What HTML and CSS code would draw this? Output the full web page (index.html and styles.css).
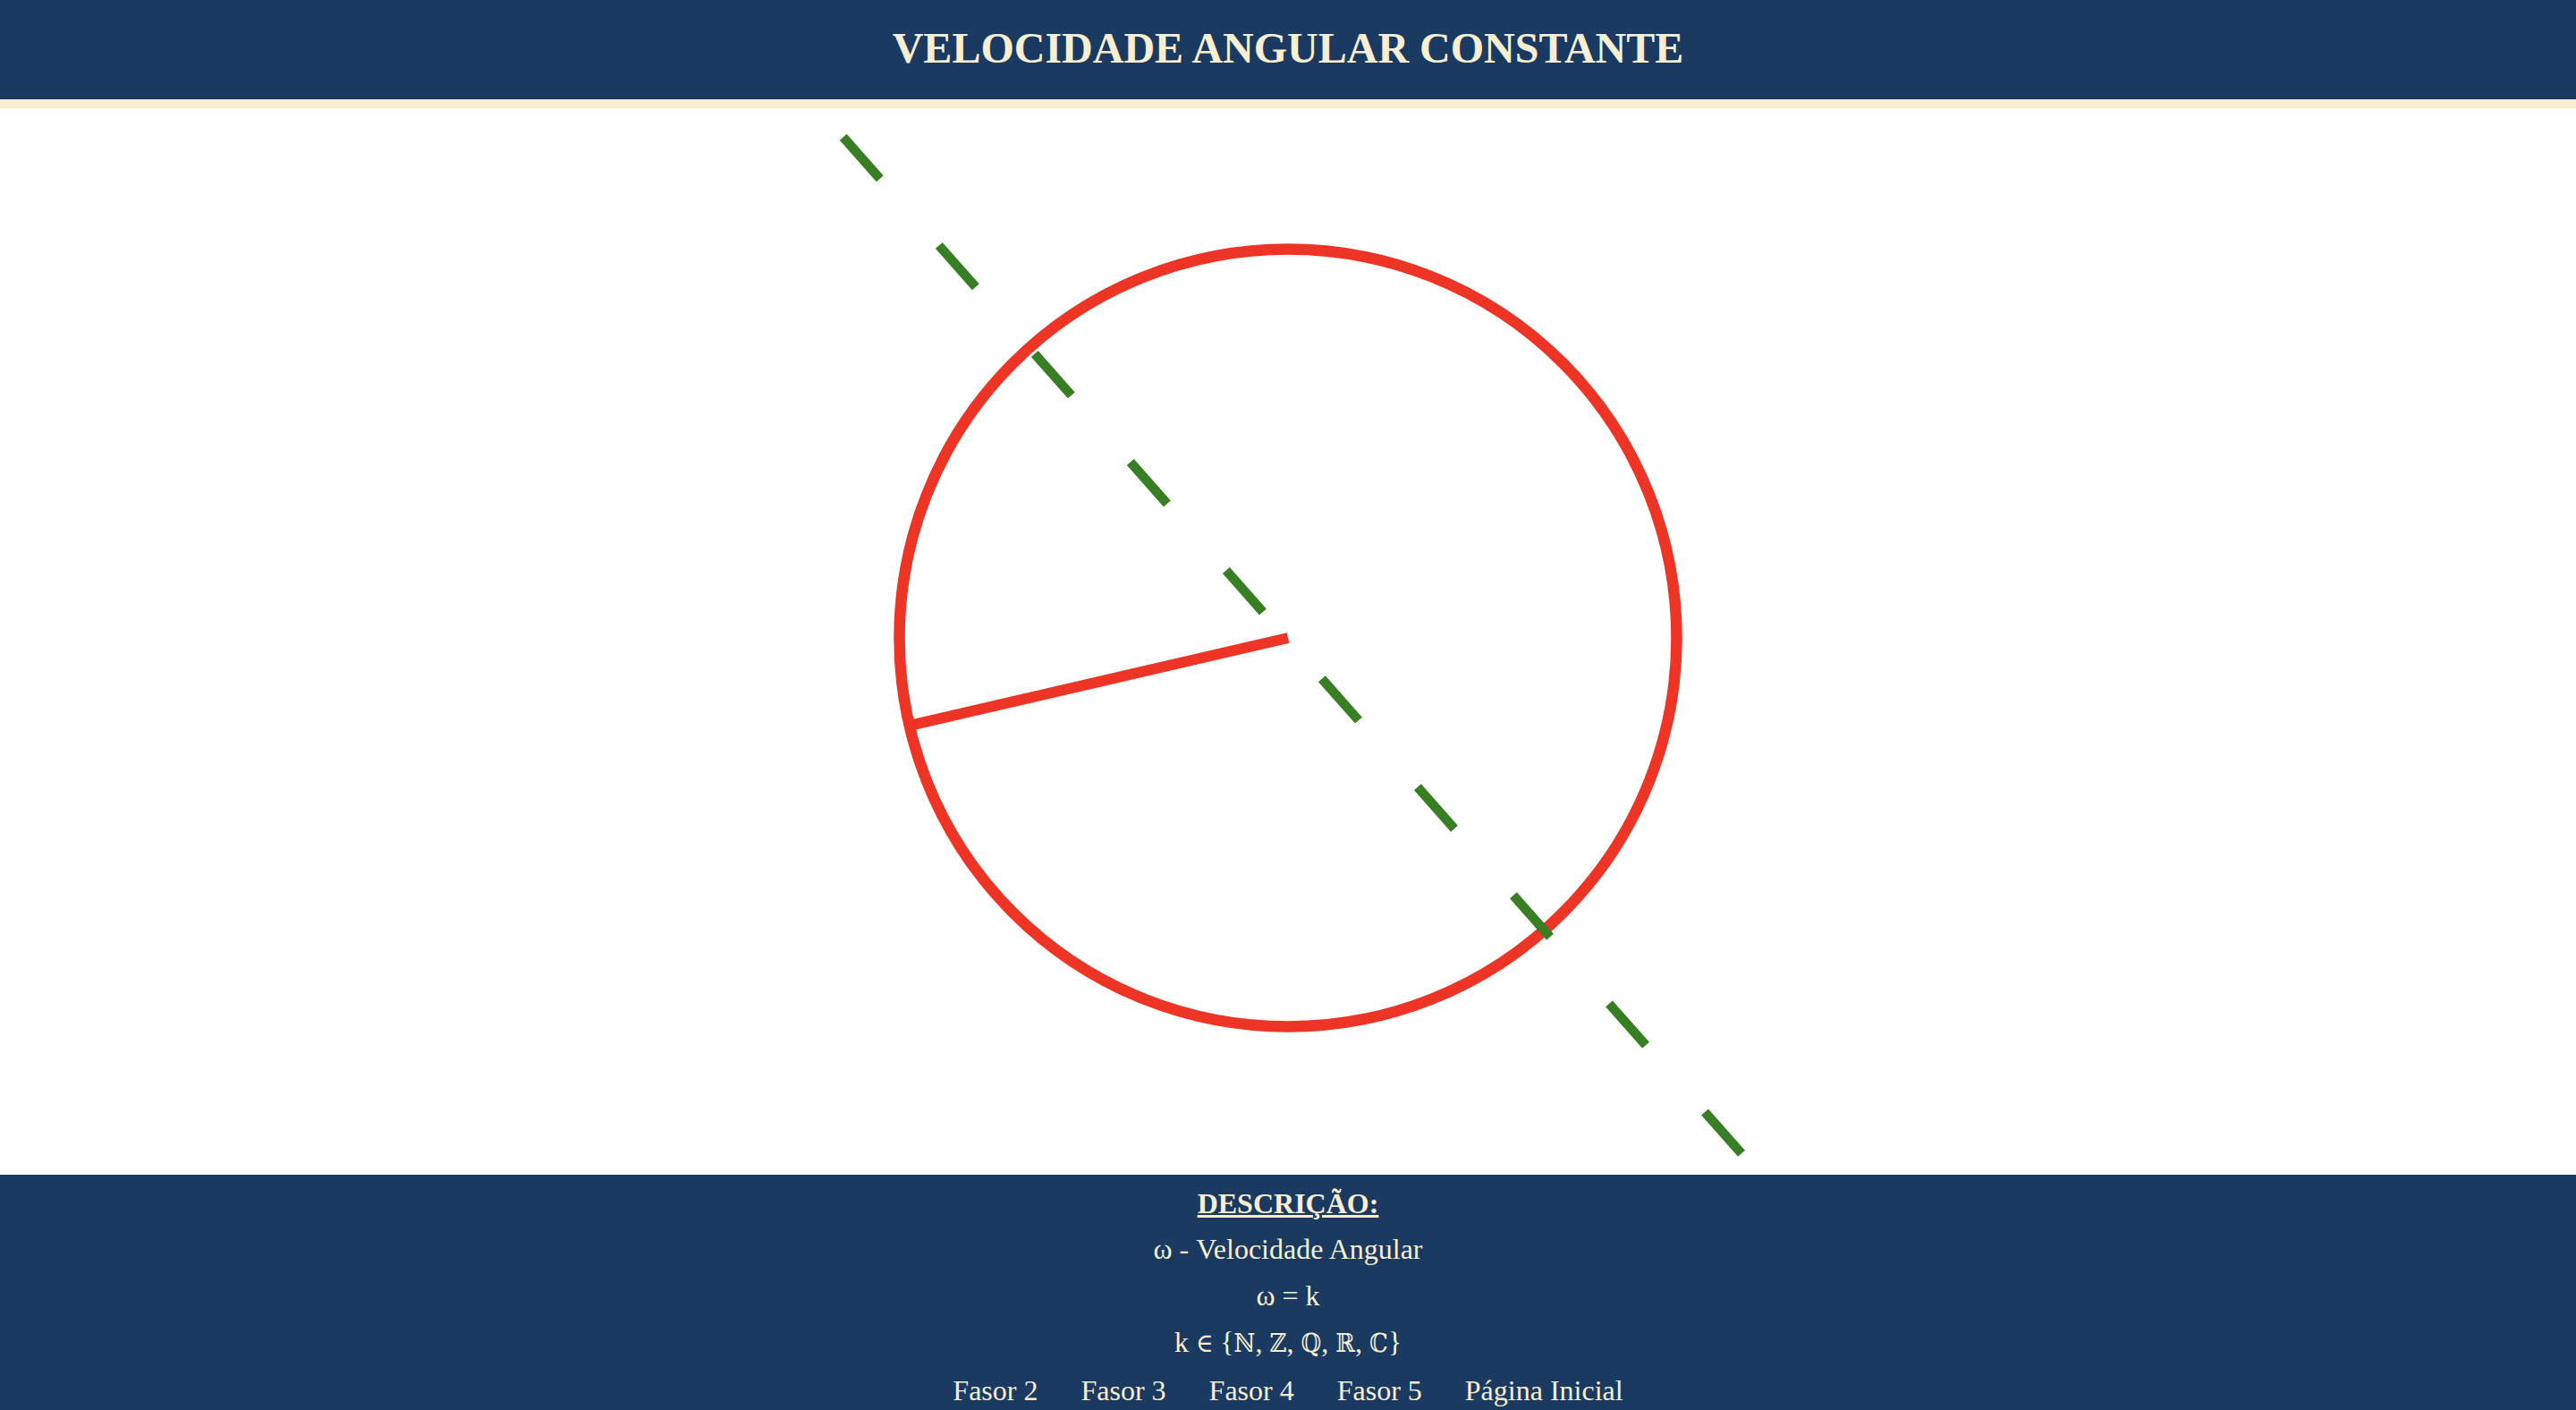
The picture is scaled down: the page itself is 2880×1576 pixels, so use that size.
FILE: index.html
```html
<!DOCTYPE html>
<html lang="pt">
<head>
<meta charset="utf-8">
<title>Velocidade Angular Constante</title>
<link rel="stylesheet" href="styles.css">
</head>
<body>
<header class="topbar">
  <h2 class="title">VELOCIDADE ANGULAR CONSTANTE</h2>
</header>
<main class="stage">
  <svg class="canvas" width="2880" height="1192" viewBox="0 121 2880 1192" xmlns="http://www.w3.org/2000/svg">
    <circle class="orbit" cx="1440" cy="713" r="434.5"/>
    <line class="radius" x1="1440" y1="713" x2="1016.2" y2="811.2"/>
    <line class="axis" x1="942.7" y1="153.3" x2="1947" y2="1289.3"/>
  </svg>
</main>
<footer class="info">
  <p class="heading">DESCRIÇÃO:</p>
  <p class="line">ω - Velocidade Angular</p>
  <p class="line">ω = k</p>
  <p class="line">k <span class="sym">∈</span> {<span class="sym">ℕ</span>, <span class="sym">ℤ</span>, <span class="sym">ℚ</span>, <span class="sym">ℝ</span>, <span class="sym">ℂ</span>}</p>
  <nav class="links">
    <a href="#">Fasor 2</a>
    <a href="#">Fasor 3</a>
    <a href="#">Fasor 4</a>
    <a href="#">Fasor 5</a>
    <a href="#">Página Inicial</a>
  </nav>
</footer>
</body>
</html>
```
FILE: styles.css
```css
html, body {
  margin: 0;
  padding: 0;
  height: 1576px;
  overflow: hidden;
  background: #ffffff;
  font-family: "Liberation Serif", "DejaVu Serif", serif;
}

.topbar {
  background: #1b3a62;
  border-bottom: 10px solid #f8efd2;
  height: 111px;
  box-sizing: content-box;
}

.title {
  margin: 0;
  padding-top: 30px;
  font-size: 48px;
  line-height: 48px;
  font-weight: bold;
  color: #f8efd2;
  text-align: center;
}

.stage {
  height: 1192px;
  background: #ffffff;
}

.canvas {
  display: block;
}

.orbit {
  fill: none;
  stroke: #ee3425;
  stroke-width: 12.5;
}

.radius {
  stroke: #ee3425;
  stroke-width: 12;
  stroke-linecap: butt;
}

.axis {
  stroke: #387e22;
  stroke-width: 10.5;
  stroke-linecap: butt;
  stroke-dasharray: 62 99.6;
}

.info {
  background: #1b3a62;
  color: #f8efd2;
  height: 263px;
  box-sizing: border-box;
  padding-top: 7px;
  text-align: center;
  font-size: 32px;
  overflow: hidden;
}

.info p {
  margin: 0;
}

.heading {
  font-weight: bold;
  text-decoration: underline;
  line-height: 50px;
}

.line {
  line-height: 52px;
}

.sym {
  font-family: "DejaVu Serif Condensed", "DejaVu Serif", serif;
  font-size: 29px;
}

.links {
  display: flex;
  justify-content: center;
  gap: 48px;
  line-height: 54px;
}

.links a {
  color: #f8efd2;
  text-decoration: none;
}
```
